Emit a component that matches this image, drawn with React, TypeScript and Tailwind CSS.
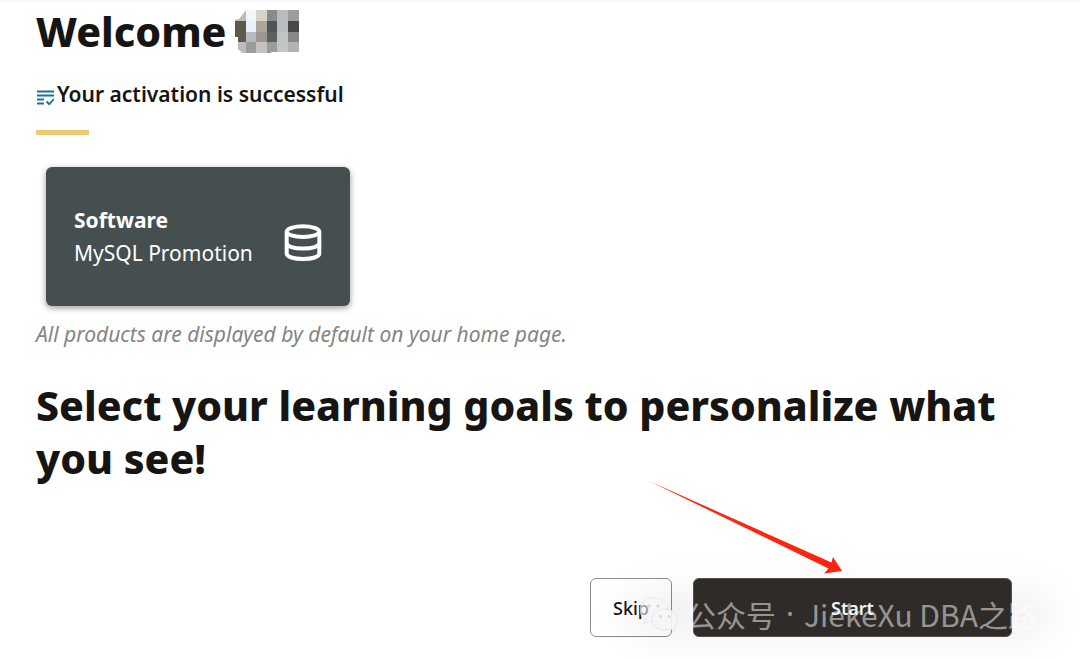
const mosaic = [
  ["fill-[#bdbcb8]", "fill-[#f1f7fb]", "fill-[#d6d3cc]", "fill-[#8a8a86]", "fill-[#b8bdbf]", "fill-[#9d9d9a]"],
  ["fill-[#5f594c]", "fill-[#e7f1fa]", "fill-[#aea598]", "fill-[#4d5455]", "fill-[#b8bdbf]", "fill-[#484845]"],
  ["fill-[#5f594c]", "fill-[#b3bac0]", "fill-[#9d968e]", "fill-[#5a6161]", "fill-[#c2c3c5]", "fill-[#888888]"],
  ["fill-[#bcbbb7]", "fill-[#9c9c9a]", "fill-[#c3c3c2]", "fill-[#9c9c9b]", "fill-[#c3c4c6]", "fill-[#b3b3b3]"],
];

function HiddenName() {
  return (
    <svg viewBox="0 0 64 43" className="h-[43px] w-16" aria-hidden="true">
      <clipPath id="name-shape">
        <path d="M11 0H64V42H36V43H7L3 39V27H0V10L4 9Z" />
      </clipPath>
      <g clipPath="url(#name-shape)" shapeRendering="crispEdges">
        {mosaic.map((row, y) =>
          row.map((fill, x) => (
            <rect
              key={`${y}-${x}`}
              x={x * 10.6}
              y={y * 10.8}
              width="11"
              height="11"
              className={fill}
            />
          ))
        )}
      </g>
    </svg>
  );
}

function ListCheckIcon() {
  return (
    <svg viewBox="0 0 18 16" className="mt-1.5 h-4 w-[18px]" fill="none" stroke="#1a7391" strokeWidth="1.8" aria-hidden="true">
      <path d="M1 1.5H18M1 5.5H18M1 9.5H8M1 13.5H8" />
      <path d="M10.5 11.5L13.2 14.2L18 9" />
    </svg>
  );
}

function DatabaseIcon() {
  return (
    <svg viewBox="0 0 38 38" className="mt-3 size-[38px] shrink-0" fill="none" stroke="white" strokeWidth="4" aria-hidden="true">
      <ellipse cx="19" cy="7.6" rx="16.3" ry="5.4" />
      <path d="M2.7 7.8V29.5C2.7 32.8 9.5 35 19 35S35.3 32.8 35.3 29.5V7.8" />
      <path d="M2.7 19C2.7 22.3 9.5 24.6 19 24.6S35.3 22.3 35.3 19" />
    </svg>
  );
}

function Arrow() {
  return (
    <svg viewBox="0 0 194 93" className="absolute right-[169px] bottom-full mb-1 h-[93px] w-[194px]" aria-hidden="true">
      <path d="M0 0L182.5 81.5L184 76L193 90L175 92.5L179.5 87.5Z" fill="#fd2412" />
    </svg>
  );
}

function Watermark() {
  return (
    <div className="pointer-events-none absolute top-2.5 left-[50px] flex items-center gap-2 whitespace-nowrap">
      <div className="absolute -inset-x-2 inset-y-2 rounded-full bg-black/5 shadow-[0_0_24px_12px_rgba(0,0,0,0.03)] blur-lg" />
      <svg viewBox="0 0 38 36" className="relative h-9 w-[38px]" aria-hidden="true">
        <path
          d="M14 2C6 2 0 7 0 14C0 18 2 21 5 23L3 28L9 25C11 26 13 26 15 26C24 26 28 20 28 14C28 7 22 2 14 2Z"
          fill="#f6f6f6"
          fillOpacity="0.6"
          stroke="#e6e6e6"
          strokeWidth="0.8"
        />
        <path
          d="M25 13C18 13 12 18 12 24C12 30 18 34 25 34C27 34 29 34 30 33L35 35L34 31C36 29 38 27 38 24C38 18 32 13 25 13Z"
          fill="#f6f6f6"
          fillOpacity="0.9"
          stroke="#e2e2e2"
          strokeWidth="0.8"
        />
        <g fill="#dadada">
          <circle cx="9" cy="10" r="1.7" />
          <circle cx="18" cy="10" r="1.7" />
          <circle cx="20.5" cy="20.5" r="1.5" />
          <circle cx="29" cy="20.5" r="1.5" />
        </g>
      </svg>
      <div className="relative flex gap-2.5 font-['Noto_Sans_CJK_SC',sans-serif] text-[30px] leading-[52px] text-white/50">
        <span>公众号</span>
        <span className="font-['Noto_Sans',sans-serif]">·</span>
        <span>JiekeXu DBA之路</span>
      </div>
    </div>
  );
}

export default function App() {
  return (
    <main className="overflow-hidden bg-white px-9 pb-[22px] font-['Noto_Sans','Open_Sans',sans-serif] text-[#161513]">
      <div className="-mx-9 h-[5px] bg-gradient-to-b from-[#f8f8f8] to-white" />

      <h1 className="flex items-center gap-2 text-[41px] leading-[53px] font-extrabold">
        Welcome
        <HiddenName />
      </h1>

      <h2 className="mt-5 flex items-center gap-[3px] text-[21px] leading-[33px] font-semibold">
        <ListCheckIcon />
        Your activation is successful
      </h2>
      <div className="mt-[19px] h-[5px] w-[53px] bg-[#eecb70]" />

      <section className="mt-8 ml-2.5 flex h-[139px] w-[304px] items-center justify-between rounded-md bg-[#464f4f] px-7 text-white shadow-[0_2px_6px_rgba(0,0,0,0.4)]">
        <div className="text-[21px] leading-[33px]">
          <h3 className="font-bold">Software</h3>
          <p>MySQL Promotion</p>
        </div>
        <DatabaseIcon />
      </section>

      <p className="mt-3 text-[21px] leading-[33px] text-[#858585] italic">
        All products are displayed by default on your home page.
      </p>

      <h2 className="mt-7 text-[41px] leading-[53px] font-extrabold">
        Select your learning goals to personalize what you see!
      </h2>

      <div className="mt-[93px] flex justify-end pr-8">
        <div className="relative flex gap-[21px]">
          <button
            type="button"
            className="h-[59px] w-[82px] rounded-md border border-[#8b8b8b] bg-white text-lg font-medium"
          >
            Skip
          </button>
          <button
            type="button"
            className="h-[59px] w-[319px] rounded-md border border-[#55534f] bg-[#312d2a] text-lg font-semibold text-white"
          >
            Start
          </button>
          <Arrow />
          <Watermark />
        </div>
      </div>
    </main>
  );
}
